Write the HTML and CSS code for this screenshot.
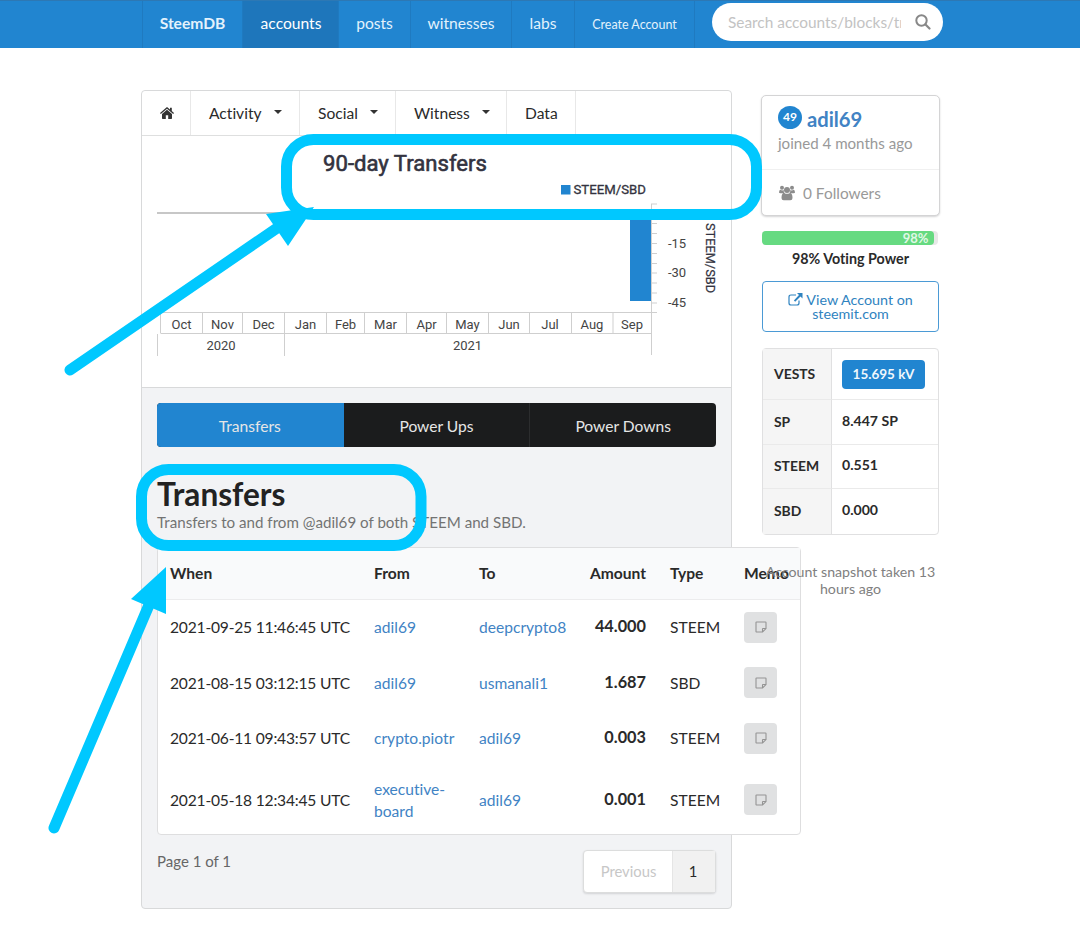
FILE: index.html
```html
<!DOCTYPE html>
<html lang="en">
<head>
  <meta charset="UTF-8">
  <meta name="viewport" content="width=device-width, initial-scale=1.0">
  <title>adil69 - SteemDB</title>
  <link rel="stylesheet" href="styles.css">
</head>
<body>
  <svg width="0" height="0" class="defs">
    <symbol id="note" viewBox="0 0 12 12">
      <path d="M1.6 1h8.8q.6 0 .6.6v6L7.600 11h-6q-.6 0-.6-.6V1.600q0-.6.6-.6zM11 7.500H8q-.5 0-.5.5v3" fill="none" stroke="currentColor" stroke-width="1.1"/>
    </symbol>
  </svg>

  <nav class="topbar">
    <a class="brand">SteemDB</a>
    <a class="accounts active">accounts</a>
    <a class="posts">posts</a>
    <a class="witnesses">witnesses</a>
    <a class="labs">labs</a>
    <a class="create">Create Account</a>
    <div class="search">
      <span>Search accounts/blocks/transactions</span>
      <svg width="16" height="16" viewBox="0 0 16 16"><circle cx="6.500" cy="6.500" r="5.200" fill="none" stroke="#888" stroke-width="2"/><path d="M10.500 10.500l4 4" stroke="#888" stroke-width="2.200" stroke-linecap="round"/></svg>
    </div>
  </nav>

  <div class="container">
    <main class="main">
      <div class="tabs">
        <a class="home"><svg width="14" height="12" viewBox="0 0 14 12"><path d="M7 0L0 6l.8.9L7 1.800l6.200 5.100.8-.9-2.200-1.900V.7H10v1.700zM7 2.800L2 7v4.300q0 .7.7.7H5.800V8.300h2.400V12h3.100q.7 0 .7-.7V7z" fill="#333"/></svg></a>
        <a class="activity">Activity <i class="caret"></i></a>
        <a class="social">Social <i class="caret"></i></a>
        <a class="witness">Witness <i class="caret"></i></a>
        <a class="data">Data</a>
      </div>

      <div class="chart">
        <svg width="589" height="251" viewBox="142 136 589 251">
          <text x="405" y="171" class="chart-title" text-anchor="middle">90-day Transfers</text>
          <rect x="561" y="185" width="9.500" height="9.500" fill="#2185d0"/>
          <text x="573.500" y="194.300" class="legend">STEEM/SBD</text>
          <path d="M157 213h494" stroke="#b4b4b4" stroke-width="1.500"/>
          <rect x="630" y="213" width="21.500" height="88" fill="#2185d0"/>
          <path class="axis" d="M651.500 204v151M651 204h6M651 213.500h6M651 223.500h6M651 233.500h6M651 243.500h6M651 253.500h6M651 263.500h6M651 273h6M651 283h6M651 293h6M651 303h6M157 312.500h500M160.500 333.500h491M157.500 334v22M160.500 313v20M202.500 313v20M242.500 313v20M284.500 313v43M326.500 313v20M364.500 313v20M406.500 313v20M446.500 313v20M488.500 313v20M529.500 313v20M571.500 313v20M613 313v20"/>
          <g class="tick" text-anchor="middle">
            <text x="181.500" y="329">Oct</text><text x="222.500" y="329">Nov</text><text x="263.500" y="329">Dec</text>
            <text x="305.500" y="329">Jan</text><text x="345.500" y="329">Feb</text><text x="385.500" y="329">Mar</text>
            <text x="426.500" y="329">Apr</text><text x="467.500" y="329">May</text><text x="509" y="329">Jun</text>
            <text x="550" y="329">Jul</text><text x="592" y="329">Aug</text><text x="632" y="329">Sep</text>
            <text x="221" y="350">2020</text><text x="467.500" y="350">2021</text>
            <text x="672" y="218">0</text>
            <text x="677" y="248">-15</text><text x="677" y="277">-30</text><text x="677" y="307">-45</text>
          </g>
          <text class="axis-name" transform="translate(705.500 258) rotate(90)" text-anchor="middle">STEEM/SBD</text>
        </svg>
      </div>

      <div class="content">
        <div class="switch">
          <a class="active">Transfers</a>
          <a>Power Ups</a>
          <a>Power Downs</a>
        </div>
        <h2>Transfers</h2>
        <p class="sub">Transfers to and from @adil69 of both STEEM and SBD.</p>

        <table class="transfers">
          <thead>
            <tr><th class="c-when">When</th><th class="c-from">From</th><th class="c-to">To</th><th class="c-amount">Amount</th><th class="c-type">Type</th><th class="c-memo">Memo</th></tr>
          </thead>
          <tbody>
            <tr><td class="when">2021-09-25 11:46:45 UTC</td><td><a>adil69</a></td><td><a>deepcrypto8</a></td><td class="amount">44.000</td><td>STEEM</td><td><button><svg width="12" height="12"><use href="#note"/></svg></button></td></tr>
            <tr><td class="when">2021-08-15 03:12:15 UTC</td><td><a>adil69</a></td><td><a>usmanali1</a></td><td class="amount">1.687</td><td>SBD</td><td><button><svg width="12" height="12"><use href="#note"/></svg></button></td></tr>
            <tr><td class="when">2021-06-11 09:43:57 UTC</td><td><a>crypto.piotr</a></td><td><a>adil69</a></td><td class="amount">0.003</td><td>STEEM</td><td><button><svg width="12" height="12"><use href="#note"/></svg></button></td></tr>
            <tr class="tall"><td class="when">2021-05-18 12:34:45 UTC</td><td><a>executive-board</a></td><td><a>adil69</a></td><td class="amount">0.001</td><td>STEEM</td><td><button><svg width="12" height="12"><use href="#note"/></svg></button></td></tr>
          </tbody>
        </table>

        <div class="pager">
          <span class="pages">Page 1 of 1</span>
          <div class="page-menu"><a class="prev">Previous</a><a class="current">1</a></div>
        </div>
      </div>
    </main>

    <aside class="side">
      <div class="card">
        <div class="user">
          <div class="name"><span class="level">49</span><a>adil69</a></div>
          <div class="joined">joined 4 months ago</div>
        </div>
        <div class="followers">
          <svg width="16" height="16" viewBox="0 0 16 16" fill="#8c8c8c"><circle cx="3" cy="2.800" r="2"/><circle cx="13" cy="2.800" r="2"/><circle cx="8" cy="5" r="3"/><path d="M0 7.500Q0 4.800 1.500 4.800q1.500 1 3.200.3-.3 2 1 3.200H1.500Q0 8.300 0 7.500zM16 7.500q0-2.700-1.500-2.700-1.500 1-3.200.3.300 2-1 3.200h4.200q1.500 0 1.500-.8zM2.500 13q0-5 2.800-5 2.700 1.700 5.400 0 2.800 0 2.800 5 0 2.300-2.200 2.300H4.700Q2.500 15.300 2.500 13z"/></svg>
          0 Followers
        </div>
      </div>

      <div class="progress"><div class="bar" style="width: 98%">98%</div></div>
      <div class="power">98% Voting Power</div>

      <a class="view"><svg width="15" height="13" viewBox="0 0 15 13"><path d="M8 2H3Q1 2 1 4v6q0 2 2 2h6q2 0 2-2V7.500" fill="none" stroke="#2f83c0" stroke-width="1.200"/><path d="M9 0h5.500v5.500l-2-2-5.300 5.200-1.300-1.300L11 2.100z" fill="#2f83c0"/></svg> View Account on<br>steemit.com</a>

      <table class="balances">
        <tr class="first"><th>VESTS</th><td><span class="vests">15.695 kV</span></td></tr>
        <tr><th>SP</th><td>8.447 SP</td></tr>
        <tr><th>STEEM</th><td>0.551</td></tr>
        <tr><th>SBD</th><td>0.000</td></tr>
      </table>
      <p class="snapshot">Account snapshot taken 13 hours ago</p>
    </aside>
  </div>

  <!-- highlights and arrows over the page -->
  <svg class="marks" width="1080" height="928" viewBox="0 0 1080 928">
    <g fill="none" stroke="#00c8ff" stroke-width="11">
      <rect x="286.500" y="139.500" width="470" height="75" rx="27"/>
      <rect x="141.500" y="469.500" width="279.500" height="76" rx="27"/>
      <path d="M70 370L283 224M54 828L149 605" stroke-linecap="round"/>
    </g>
    <path d="M266 214L314 207 288 246zM166 567v47l-35-15z" fill="#00c8ff"/>
  </svg>
</body>
</html>
```
FILE: styles.css
```css
* {
  box-sizing: border-box;
}

body {
  margin: 0;
  height: 928px;
  overflow: hidden;
  position: relative;
  background: #fff;
  color: #2a2a2a;
  font-family: Lato, sans-serif;
  font-size: 15.6px;
  font-variant-ligatures: none;
}

.defs {
  position: absolute;
}

.topbar {
  display: flex;
  height: 48px;
  padding-left: 142px;
  background: #2185d0;
  border-top: 1px solid #2d78b4;
  color: #e3f2fc;
}

.topbar > a {
  display: flex;
  align-items: center;
  justify-content: center;
  border-right: 1px solid #1f7ac0;
  padding-bottom: 3px;
}

.topbar .brand { width: 101px; font-weight: bold; border-left: 1px solid #1f7ac0; }
.topbar .accounts { width: 96px; padding-left: 1px; }
.topbar .posts { width: 72px; }
.topbar .witnesses { width: 101px; }
.topbar .labs { width: 63px; }
.topbar .create { width: 120px; font-size: 12.500px; padding-top: 2px; }

.topbar .active {
  background: #1e76bb;
  color: #fff;
}

.search {
  display: flex;
  align-items: center;
  justify-content: space-between;
  width: 231px;
  height: 38px;
  margin: 2px 0 0 17px;
  padding: 0 12px 0 16px;
  border-radius: 19px;
  background: #fff;
  color: #c3c3c3;
}

.search span {
  width: 173px;
  overflow: hidden;
  white-space: nowrap;
  font-size: 15.400px;
}

.container {
  display: flex;
  align-items: flex-start;
  padding: 42px 0 0 141px;
}

.main {
  width: 591px;
  height: 819px;
  border: 1px solid #d8d9da;
  border-radius: 4px;
  background: #f2f3f5;
}

.tabs {
  display: flex;
  height: 45px;
  background: #fff;
  border-bottom: 1px solid #dedfdf;
  border-radius: 4px 4px 0 0;
}

.tabs a {
  display: flex;
  align-items: center;
  border-right: 1px solid #e8e8e8;
  padding: 0 0 1px 18px;
}

.tabs .home { width: 49px; }
.tabs .activity { width: 109px; }
.tabs .social { width: 96px; }
.tabs .witness { width: 111px; }
.tabs .data { width: 69px; }

.caret {
  margin: -1px 0 0 12px;
  border: 4.500px solid transparent;
  border-top-color: #333;
  border-bottom: 0;
}

.chart {
  height: 252px;
  background: #fff;
  border-bottom: 1px solid #d8d9da;
}

.chart svg {
  display: block;
}

.chart text {
  font-family: Roboto, sans-serif;
  font-size: 13px;
  fill: #444;
}

.chart .chart-title {
  font-size: 22.100px;
  fill: #333340;
  stroke: #333340;
  stroke-width: 0.6px;
}

.chart .legend {
  font-size: 13.200px;
  fill: #333340;
  stroke: #333340;
  stroke-width: 0.3px;
}

.chart .axis-name {
  font-size: 12.800px;
  fill: #333340;
  stroke: #333340;
  stroke-width: 0.2px;
}

.axis {
  fill: none;
  stroke: #cfcfcf;
  stroke-width: 1px;
}

.content {
  padding: 15px;
}

.switch {
  display: flex;
  height: 44px;
  border-radius: 4px;
  overflow: hidden;
  background: #1b1c1d;
  color: #e6e6e6;
}

.switch a {
  flex: 1;
  display: flex;
  align-items: center;
  justify-content: center;
  padding-top: 1px;
  border-right: 1px solid #2c2d2e;
}

.switch a:last-child {
  border-right: 0;
}

.switch .active {
  background: #2185d0;
  border-right-color: #2185d0;
}

h2 {
  margin: 29px 0 0;
  font-size: 31.600px;
  line-height: 36px;
  color: #222;
}

.sub {
  margin: 0;
  line-height: 21px;
  font-size: 15.150px;
  color: #737373;
}

.transfers {
  width: 644px;
  margin-top: 14px;
  table-layout: fixed;
  border: 1px solid #dededf;
  border-radius: 4px;
  border-spacing: 0;
  background: #fff;
}

.transfers th,
.transfers td {
  padding: 0 12px 1px;
  text-align: left;
}

.transfers th {
  height: 52px;
  background: #f9fafb;
  border-bottom: 1px solid #ececed;
}

.transfers td {
  height: 55.500px;
  line-height: 22px;
}

.transfers .tall td {
  height: 67px;
}

.c-when { width: 204px; }
.c-from { width: 105px; }
.c-to { width: 110px; }
.c-amount { width: 81px; }
.c-type { width: 74px; }

.transfers .when {
  padding-right: 0;
  white-space: nowrap;
  letter-spacing: -0.2px;
}

.transfers .c-amount,
.transfers .amount {
  text-align: right;
}

.transfers .amount {
  font-size: 16.300px;
  font-weight: bold;
  padding-bottom: 3px;
}

.transfers a {
  color: #4183c4;
}

.transfers button {
  display: flex;
  align-items: center;
  justify-content: center;
  width: 33px;
  height: 31px;
  padding: 0;
  border: 0;
  border-radius: 4px;
  background: #e0e1e2;
  color: #949494;
}

.pager {
  display: flex;
  justify-content: space-between;
  margin-top: 16px;
}

.pages {
  margin-top: 1px;
  color: #666;
  font-size: 15px;
}

.page-menu {
  display: flex;
  width: 133px;
  height: 43px;
  margin-top: -1px;
  border: 1px solid #dcdddd;
  border-radius: 4px;
  background: #fff;
  box-shadow: 0 1px 2px rgba(34, 36, 38, 0.15);
}

.page-menu a {
  display: flex;
  align-items: center;
  justify-content: center;
  font-size: 14.800px;
}

.page-menu .prev {
  width: 88px;
  padding-left: 1px;
  color: #c7c7c7;
}

.page-menu .current {
  flex: 1;
  padding-right: 2px;
  background: #f1f1f1;
  border-left: 1px solid #e5e5e5;
}

.side {
  position: relative;
  width: 179px;
  margin: 5px 0 0 29px;
  font-size: 14.500px;
}

.card {
  height: 121px;
  border: 1px solid #d4d4d5;
  border-radius: 5px;
  background: #fff;
  box-shadow: 0 1px 2px #d4d4d5;
  color: #999;
  font-size: 15.500px;
}

.user {
  height: 74px;
  padding: 10px 0 0 15px;
  border-bottom: 1px solid #f0f0f0;
}

.name {
  display: flex;
  align-items: center;
  height: 25px;
  font-size: 20.200px;
  font-weight: bold;
  color: #4183c4;
}

.level {
  width: 24px;
  height: 23px;
  margin: -2px 5px 0 1px;
  border-radius: 50%;
  background: #2185d0;
  color: #fff;
  font-size: 12px;
  line-height: 22px;
  text-align: center;
}

.joined {
  padding-left: 1px;
  line-height: 24px;
  font-size: 15.100px;
}

.followers {
  display: flex;
  align-items: center;
  gap: 8px;
  height: 46px;
  padding-left: 17px;
  font-size: 15.400px;
}

.progress {
  width: 176px;
  height: 14px;
  margin: 15px 0 0 1px;
  border-radius: 4px;
  background: #e8e8e8;
}

.bar {
  height: 14px;
  padding-right: 6px;
  border-radius: 4px;
  background: #66da81;
  color: #e0f8e6;
  font-size: 13px;
  font-weight: bold;
  line-height: 14px;
  text-align: right;
}

.power {
  line-height: 27px;
  font-size: 14.300px;
  font-weight: bold;
  text-align: center;
}

.view {
  display: block;
  width: 177px;
  height: 51px;
  margin: 9px 0 0 1px;
  padding-top: 11px;
  border: 1px solid #4b9ad5;
  border-radius: 4px;
  color: #2f83c0;
  font-size: 14.300px;
  line-height: 14.400px;
  text-align: center;
}

.view svg {
  vertical-align: -1px;
}

.balances {
  width: 177px;
  margin: 16px 0 0 1px;
  table-layout: fixed;
  border: 1px solid #e0e0e1;
  border-radius: 4px;
  border-spacing: 0;
  font-weight: bold;
}

.balances th {
  width: 69px;
  height: 44.500px;
  padding: 0 0 1px 11px;
  background: #f5f5f5;
  border-right: 1px solid #e0e0e1;
  border-bottom: 1px solid #eaeaea;
  text-align: left;
  font-size: 13.900px;
}

.balances td {
  padding: 0 0 3px 10px;
  font-size: 14.100px;
  border-bottom: 1px solid #eaeaea;
}

.balances .first th {
  height: 51px;
}

.balances .first td {
  padding-bottom: 0;
}

.balances tr:last-child > * {
  border-bottom: 0;
}

.vests {
  display: inline-block;
  width: 83px;
  height: 29px;
  border-radius: 4px;
  background: #2185d0;
  color: #f0f7fc;
  line-height: 28px;
  text-align: center;
  font-size: 13.500px;
}

.snapshot {
  margin: 28px 0 0;
  line-height: 17px;
  font-size: 14.200px;
  text-align: center;
  color: #808080;
}

.marks {
  position: absolute;
  top: 0;
  left: 0;
  pointer-events: none;
}
```
